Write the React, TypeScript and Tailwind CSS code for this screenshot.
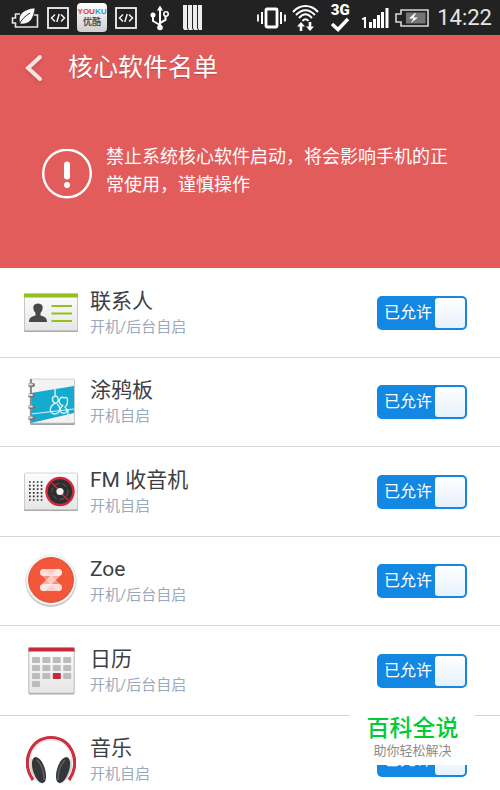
import { useState } from "react";
import type { ReactNode } from "react";

interface AppEntry {
  id: string;
  name: string;
  hint: string;
  icon: ReactNode;
}

/* ---------- status bar icons ---------- */

function LeafBatteryIcon() {
  return (
    <svg width="28" height="22" viewBox="0 0 28 22" fill="none" aria-hidden="true">
      <path d="M9 7H4.500V11H1.500V16H4.500V20H26.500V8H23" stroke="#e6e6e6" strokeWidth="1.600" />
      <path d="M9 17C6 8 12 2 24 1C23 12 18 18 9 17Z" fill="#fff" stroke="#222" strokeWidth="0.600" />
      <path d="M8 18C10 13 14 9 19 6" stroke="#222" strokeWidth="1" />
    </svg>
  );
}

function CodeIcon() {
  return (
    <svg width="22" height="22" viewBox="0 0 22 22" fill="none" stroke="#f2f2f2" aria-hidden="true">
      <rect x="1" y="1" width="20" height="20" strokeWidth="1.800" />
      <path d="M8 7.500L4.500 11L8 14.500M14 7.500L17.500 11L14 14.500M12.200 7L9.800 15" strokeWidth="1.500" />
    </svg>
  );
}

function YoukuBadge() {
  return (
    <div className="flex h-[29px] w-[30px] flex-col items-center justify-center rounded-sm bg-gradient-to-b from-white to-[#cfcfcf]">
      <span className="font-['Liberation_Sans'] text-[8px] leading-[10px] font-bold text-[#e8382d]">
        YOU<span className="text-[#1b9be0]">KU</span>
      </span>
      <span className="text-[9px] leading-[11px] font-bold text-[#555]">优酷</span>
    </div>
  );
}

function UsbIcon() {
  return (
    <svg width="28" height="26" viewBox="0 0 28 26" fill="none" stroke="#fff" strokeWidth="2" aria-hidden="true">
      <path d="M15 4V22M15 20L8 16V11M15 18L20.500 15V11" />
      <path d="M15 0.500L18 5.500H12Z" fill="#fff" stroke="none" />
      <circle cx="15" cy="22.500" r="2.800" fill="#fff" stroke="none" />
      <circle cx="8" cy="10" r="2.500" fill="#fff" stroke="none" />
      <circle cx="21" cy="9" r="2.200" strokeWidth="1.600" />
    </svg>
  );
}

function BarsIcon() {
  return (
    <svg width="24" height="25" viewBox="0 0 24 25" fill="#ededed" aria-hidden="true">
      <path d="M2 0H6V23L7 25H3L2 23ZM7 0H11V23L12 25H8L7 23ZM12 0H16V23L17 25H13L12 23ZM17 0H21V25H18L17 23Z" />
    </svg>
  );
}

function VibrateIcon() {
  return (
    <svg width="30" height="22" viewBox="0 0 30 22" fill="none" stroke="#fff" aria-hidden="true">
      <rect x="10" y="2" width="11" height="18" rx="1" strokeWidth="2.800" />
      <path d="M6 5V17M25 5V17" strokeWidth="2" />
      <path d="M2 7.500V14.500M29 7.500V14.500" strokeWidth="1.800" />
    </svg>
  );
}

function WifiIcon() {
  return (
    <svg width="27" height="28" viewBox="0 0 27 28" fill="none" stroke="#fff" aria-hidden="true">
      <path
        d="M1 8C8 0 19 0 26 8M4 11C10 4.500 17 4.500 23 11M7 14C11.500 9 15.500 9 20 14M10.500 17C12.500 14.500 14.500 14.500 16.500 17"
        strokeWidth="2"
      />
      <path d="M9 27V21M18 18V23" strokeWidth="2.600" />
      <path d="M9 18L13 22.500H5ZM18 27L14 22.500H22Z" fill="#fff" stroke="none" />
    </svg>
  );
}

function NetworkIcon() {
  return (
    <div className="flex w-[30px] flex-col items-center">
      <span className="font-['Roboto'] text-[15px] leading-[13px] font-black text-white">3G</span>
      <svg width="20" height="15" viewBox="0 0 20 15" fill="none" aria-hidden="true">
        <path d="M2 7L8 12.500L18 2" stroke="#fff" strokeWidth="3.400" />
      </svg>
    </div>
  );
}

function SignalIcon() {
  return (
    <svg width="28" height="21" viewBox="0 0 28 21" fill="#fff" aria-hidden="true">
      <path d="M1 11.500L3.500 10H5V21H3V12.500L1 13Z" />
      <path d="M8 15H11V21H8ZM12 12H15V21H12ZM16 8H19V21H16ZM20 5H23V21H20ZM24.500 1H27.500V21H24.500Z" />
    </svg>
  );
}

function ChargingIcon() {
  return (
    <svg width="36" height="18" viewBox="0 0 36 18" fill="none" aria-hidden="true">
      <path d="M6 1H33V17H6V13H1V5H6Z" stroke="#d8d8d8" strokeWidth="1.600" />
      <rect x="11" y="3.500" width="19.500" height="11" fill="#757575" />
      <path d="M20 4L14 9.500H18.500L16 14L23 8.500H18.500L21 4Z" fill="#fff" />
    </svg>
  );
}

/* ---------- app icons ---------- */

function PaperGradient({ id }: { id: string }) {
  return (
    <linearGradient id={id} x1="0" y1="0" x2="0" y2="1">
      <stop offset="0" stopColor="#fdfdfd" />
      <stop offset="1" stopColor="#e6e6e6" />
    </linearGradient>
  );
}

function ContactsIcon() {
  return (
    <svg width="56" height="40" viewBox="0 0 56 40" aria-hidden="true">
      <defs>
        <PaperGradient id="contacts-paper" />
      </defs>
      <rect x="1" y="2" width="54" height="37" rx="1.500" fill="#a8a8a8" />
      <rect x="1.500" y="1" width="53" height="36.500" rx="1" fill="url(#contacts-paper)" stroke="#c4c4c4" strokeWidth="0.800" />
      <rect x="1" y="0.500" width="54" height="4" fill="#93c01f" />
      <path d="M6 29C6 25 8 23.500 12.500 22.500V20C10.500 18 10 15 10.500 13C11.500 9.500 18.500 9.500 19.500 13C20 15 19.500 18 17.500 20V22.500C22 23.500 24 25 24 29Z" fill="#484848" />
      <path d="M28.500 13H49M28.500 20.500H49M28.500 28H49" stroke="#93c01f" strokeWidth="2" />
    </svg>
  );
}

function ScribbleIcon() {
  return (
    <svg width="50" height="48" viewBox="0 0 50 48" fill="none" aria-hidden="true">
      <rect x="4" y="2" width="45" height="45" rx="1.500" fill="#a3a3a3" />
      <rect x="4" y="1" width="44.500" height="44" rx="1" fill="#f3f3f3" stroke="#c9c9c9" strokeWidth="0.800" />
      <path d="M5 15L48 8V35L5 45Z" fill="#14abce" />
      <path d="M5 36L48 31" stroke="#d8f3f8" strokeWidth="1" />
      <path
        d="M29 11V18C25 19 26 25 30 25C33 25 33 18 29 18M30 25C24 27 22 34 28 36C35 36 35 29 31 26M35 27C31 23 35 17 38 20C43 17 42 27 39 29C44 34 37 38 34 33C33 29 40 27 35 27M42 31V43"
        stroke="#d8f3f8"
        strokeWidth="1.400"
      />
      <path d="M5 1V45" stroke="#8c8c8c" strokeWidth="2" />
      <path d="M4 7H7M4 17.500H7M4 29H7M4 40H7" stroke="#777" strokeWidth="4" strokeLinecap="round" />
      <path d="M3 6.500H6M3 17H6M3 28.500H6M3 39.500H6" stroke="#ddd" strokeWidth="1.800" strokeLinecap="round" />
    </svg>
  );
}

function RadioIcon() {
  return (
    <svg width="56" height="40" viewBox="0 0 56 40" fill="none" aria-hidden="true">
      <defs>
        <PaperGradient id="radio-body" />
      </defs>
      <rect x="1" y="2" width="54" height="37" rx="1.500" fill="#a8a8a8" />
      <rect x="1.500" y="1" width="53" height="36.500" rx="1" fill="url(#radio-body)" stroke="#c9c9c9" strokeWidth="0.800" />
      <path
        d="M6 10H20M6 13.600H20M6 17.200H20M6 20.800H20M6 24.400H20M6 28H20"
        stroke="#333"
        strokeWidth="1.700"
        strokeDasharray="1.700 2.200"
      />
      <circle cx="37" cy="19.500" r="14.700" fill="#d3283a" />
      <circle cx="37" cy="19.500" r="12.200" fill="#2e2e30" />
      <circle cx="37" cy="19.500" r="8" stroke="#69696b" strokeWidth="0.800" strokeDasharray="5 3" />
      <path d="M29 11L35 17M39 22L45 28" stroke="#d3283a" strokeWidth="1.500" />
      <circle cx="37" cy="19.500" r="3.600" fill="#f4f4f4" />
    </svg>
  );
}

function ZoeIcon() {
  return (
    <svg width="52" height="54" viewBox="0 0 52 54" fill="none" aria-hidden="true">
      <circle cx="26" cy="27.500" r="25.500" fill="#c9c9c9" />
      <circle cx="26" cy="26" r="25" fill="#f8f8f8" stroke="#dedede" strokeWidth="0.600" />
      <circle cx="26" cy="26" r="22.500" fill="#f3573a" stroke="#cf4029" strokeWidth="0.800" />
      <g stroke="#fff" strokeWidth="7" strokeLinecap="round">
        <path d="M33.500 18.500L18.500 33.500" strokeOpacity="0.550" />
        <path d="M18.500 18.500L33.500 33.500" strokeOpacity="0.350" />
        <path d="M18.500 18.500H33.500M18.500 33.500H33.500" strokeOpacity="0.700" />
      </g>
    </svg>
  );
}

// filled day columns for each week row
const CALENDAR_CELLS = [
  [0, 1, 2, 3],
  [0, 1, 2, 3],
  [0, 1, 2, 3],
  [0],
];

function CalendarIcon() {
  return (
    <svg width="47" height="48" viewBox="0 0 47 48" aria-hidden="true">
      <defs>
        <PaperGradient id="calendar-paper" />
      </defs>
      <rect x="0.500" y="2" width="46" height="45.500" rx="1.500" fill="#a8a8a8" />
      <rect x="1" y="1" width="45" height="45" rx="1" fill="url(#calendar-paper)" stroke="#c4c4c4" strokeWidth="0.800" />
      <rect x="0.500" y="0.500" width="46" height="4" fill="#c6293b" />
      {CALENDAR_CELLS.map((cols, row) =>
        cols.map((col) => (
          <rect
            key={`${row}-${col}`}
            x={4 + col * 10.4}
            y={10 + row * 8}
            width="8"
            height="6"
            rx="0.800"
            fill={row === 2 && col === 2 ? "#c6293b" : "#bcbcbc"}
          />
        )),
      )}
    </svg>
  );
}

function HeadphonesIcon() {
  return (
    <svg width="50" height="50" viewBox="0 0 50 50" fill="none" aria-hidden="true">
      <path d="M7 45C0 35 1 25 2.500 20C6 8 15 2.500 25 2.500C35 2.500 44 8 47.500 20C49 25 50 35 43 45" stroke="#cb2f40" strokeWidth="3.200" />
      <path d="M5.500 38C3.500 30 4 24 5 20C8 10 16 5 25 5C34 5 42 10 45 20C46 24 46.500 30 44.500 38" stroke="#e9dcdc" strokeWidth="1" />
      <path d="M5 24C3 34 6 46 17 49L13 24ZM45 24C47 34 44 46 33 49L37 24Z" fill="#d2d2d2" />
      <ellipse cx="13" cy="35" rx="6" ry="13.500" transform="rotate(-18 13 35)" fill="#34373a" />
      <ellipse cx="37" cy="35" rx="6" ry="13.500" transform="rotate(18 37 35)" fill="#34373a" />
      <path d="M11 25C15 29 18 37 18 45M39 25C35 29 32 37 32 45" stroke="#5d6063" strokeWidth="1.500" />
    </svg>
  );
}

const APPS: AppEntry[] = [
  { id: "contacts", name: "联系人", hint: "开机/后台自启", icon: <ContactsIcon /> },
  { id: "scribble", name: "涂鸦板", hint: "开机自启", icon: <ScribbleIcon /> },
  { id: "radio", name: "FM 收音机", hint: "开机自启", icon: <RadioIcon /> },
  { id: "zoe", name: "Zoe", hint: "开机/后台自启", icon: <ZoeIcon /> },
  { id: "calendar", name: "日历", hint: "开机/后台自启", icon: <CalendarIcon /> },
  { id: "music", name: "音乐", hint: "开机自启", icon: <HeadphonesIcon /> },
];

function StatusBar() {
  return (
    <div className="flex h-[35px] shrink-0 items-center justify-between bg-[#222] pr-2 pl-[11px]">
      <div className="flex items-center gap-2">
        <LeafBatteryIcon />
        <CodeIcon />
        <YoukuBadge />
        <CodeIcon />
        <UsbIcon />
        <BarsIcon />
      </div>
      <div className="flex items-center gap-1.5">
        <VibrateIcon />
        <WifiIcon />
        <NetworkIcon />
        <SignalIcon />
        <ChargingIcon />
        <time className="text-[22px] leading-[35px] text-[#e6e6e6]">14:22</time>
      </div>
    </div>
  );
}

function AppRow({ app }: { app: AppEntry }) {
  const [allowed, setAllowed] = useState(true);

  return (
    <li className="flex shrink-0 items-center border-b border-[#d6d6d6] pr-[33px] pl-[23px] odd:h-[90px] even:h-[89px]">
      <div className="flex w-[56px] shrink-0 justify-center">{app.icon}</div>
      <div className="min-w-0 flex-1 pl-[11px]">
        <h2 className="text-[21px] leading-[28px] text-[#3c3f46]">{app.name}</h2>
        <p className="text-[15px] leading-[24px] text-[#9aa9bd]">{app.hint}</p>
      </div>
      <label
        className={`flex h-[34px] w-[90px] cursor-pointer items-center rounded-[5px] p-[2px] ${
          allowed ? "bg-[#1288e2]" : "flex-row-reverse bg-[#a9b3be]"
        }`}
      >
        <input
          type="checkbox"
          role="switch"
          aria-label={app.name}
          className="sr-only"
          checked={allowed}
          onChange={(e) => setAllowed(e.target.checked)}
        />
        <span className="flex-1 pl-0.5 text-center text-[16px] leading-[30px] text-white">
          {allowed ? "已允许" : "已禁止"}
        </span>
        <span className="h-[30px] w-[30px] rounded-[3px] bg-gradient-to-b from-white to-[#e6f1fb]" />
      </label>
    </li>
  );
}

export default function App() {
  return (
    <div className="relative flex h-screen flex-col overflow-hidden bg-white font-['Roboto','Noto_Sans_CJK_SC',sans-serif]">
      <StatusBar />

      <header className="shrink-0 bg-[#e25c5c] text-white">
        <div className="flex h-[66px] items-center pl-[22px]">
          <button type="button" aria-label="返回" className="cursor-pointer drop-shadow-sm">
            <svg width="22" height="28" viewBox="0 0 22 28" fill="none">
              <path d="M18 3L6 14L18 25" stroke="#fbe3e3" strokeWidth="4" strokeLinecap="round" />
            </svg>
          </button>
          <h1 className="pl-6 text-[25px] leading-[36px] text-shadow-xs">核心软件名单</h1>
        </div>
        <div className="flex items-end gap-[14px] pt-[42px] pr-10 pb-[69px] pl-[42px]">
          <svg width="50" height="50" viewBox="0 0 50 50" className="shrink-0" fill="none" aria-hidden="true">
            <circle cx="25" cy="24.500" r="23.800" stroke="#fff" strokeWidth="2.400" />
            <path d="M25 15.500V27.500" stroke="#fff" strokeWidth="6" strokeLinecap="round" />
            <circle cx="25" cy="36" r="3" fill="#fff" />
          </svg>
          <p className="text-[18px] leading-[28px]">
            禁止系统核心软件启动，将会影响手机的正常使用，谨慎操作
          </p>
        </div>
      </header>

      <ul className="flex min-h-0 flex-1 flex-col overflow-y-auto [scrollbar-width:none]">
        {APPS.map((app) => (
          <AppRow key={app.id} app={app} />
        ))}
      </ul>

      {/* floating brand tag over the list */}
      <div className="absolute right-[25px] bottom-[25px] flex h-[65px] w-[125px] flex-col items-center justify-end bg-white pb-1">
        <strong className="text-[23px] leading-[24px] font-medium text-[#00cc33]">百科全说</strong>
        <span className="text-[13px] leading-[20px] text-[#8c8c8c]">助你轻松解决</span>
      </div>
    </div>
  );
}
